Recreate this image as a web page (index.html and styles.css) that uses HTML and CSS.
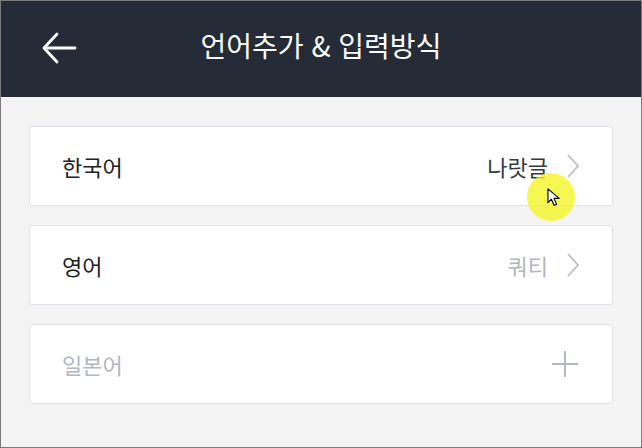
FILE: index.html
```html
<!DOCTYPE html>
<html lang="ko">
<head>
    <meta charset="UTF-8" />
    <title>언어추가 &amp; 입력방식</title>
    <link rel="stylesheet" href="styles.css">
</head>
<body>
<div class="screen">
    <header class="topbar">
        <button class="back" aria-label="뒤로">
            <svg width="36" height="32" viewBox="0 0 36 32">
                <path d="M34 16H3M16 2L3 16l13 14" fill="none" stroke="#fff" stroke-width="2.8" stroke-linecap="round" stroke-linejoin="round"/>
            </svg>
        </button>
        <h1>언어추가 &amp; 입력방식</h1>
    </header>

    <main class="list">
        <div class="item">
            <span class="name">한국어</span>
            <span class="value">나랏글</span>
            <svg class="chev" width="14" height="24" viewBox="0 0 14 24">
                <path d="M2 1l10 11L2 23" fill="none" stroke="#b9bec8" stroke-width="1.8"/>
            </svg>
            <div class="cursor">
                <svg width="14" height="19" viewBox="0 0 16 22">
                    <path d="M1 1v16l4-4 3 7 3-1-3-7h6z" fill="#fff" stroke="#000" stroke-width="1.3" stroke-linejoin="round"/>
                </svg>
            </div>
        </div>
        <div class="item">
            <span class="name">영어</span>
            <span class="value muted">쿼티</span>
            <svg class="chev" width="14" height="24" viewBox="0 0 14 24">
                <path d="M2 1l10 11L2 23" fill="none" stroke="#b9bec8" stroke-width="1.8"/>
            </svg>
        </div>
        <div class="item">
            <span class="name muted">일본어</span>
            <svg class="plus" width="26" height="26" viewBox="0 0 26 26">
                <path d="M13 0v26M0 13h26" fill="none" stroke="#b3b8c2" stroke-width="2"/>
            </svg>
        </div>
    </main>
</div>
</body>
</html>
```

FILE: styles.css
```css
html, body {
    margin: 0;
    padding: 0;
}
body {
    font-family: "Noto Sans CJK KR", "Noto Sans", sans-serif;
    background: #f4f4f4;
}
.screen {
    width: 640px;
    height: 446px;
    border: 1px solid #7a7a7a;
    background: #f4f4f4;
    overflow: hidden;
}
.topbar {
    height: 96px;
    background: #252c37;
    display: flex;
    align-items: center;
    position: relative;
}
.back {
    background: none;
    border: 0;
    padding: 0;
    margin-left: 40px;
    margin-top: -2px;
    width: 36px;
    height: 32px;
    display: flex;
}
.topbar h1 {
    position: absolute;
    left: 0;
    right: 0;
    top: 22px;
    margin: 0;
    text-align: center;
    font-size: 28px;
    font-weight: 400;
    color: #fff;
    line-height: 44px;
    pointer-events: none;
}
.list {
    padding: 29px 28px 0;
    display: flex;
    flex-direction: column;
    gap: 19px;
}
.item {
    height: 78px;
    background: #fff;
    border: 1px solid #e2e2e8;
    border-radius: 3px;
    display: flex;
    align-items: center;
    padding: 0 32px 0 32px;
    position: relative;
}
.name {
    flex: 1;
    font-size: 22px;
    color: #222;
}
.value {
    font-size: 22px;
    color: #333a44;
    margin-right: 18px;
}
.muted {
    color: #b1b6c0;
}
.plus {
    margin-right: 2px;
}
.cursor {
    position: absolute;
    left: 497px;
    top: 46px;
    width: 48px;
    height: 48px;
    border-radius: 50%;
    background: rgba(245, 245, 40, 0.8);
    z-index: 2;
}
.cursor svg {
    position: absolute;
    left: 20px;
    top: 15px;
}
```
